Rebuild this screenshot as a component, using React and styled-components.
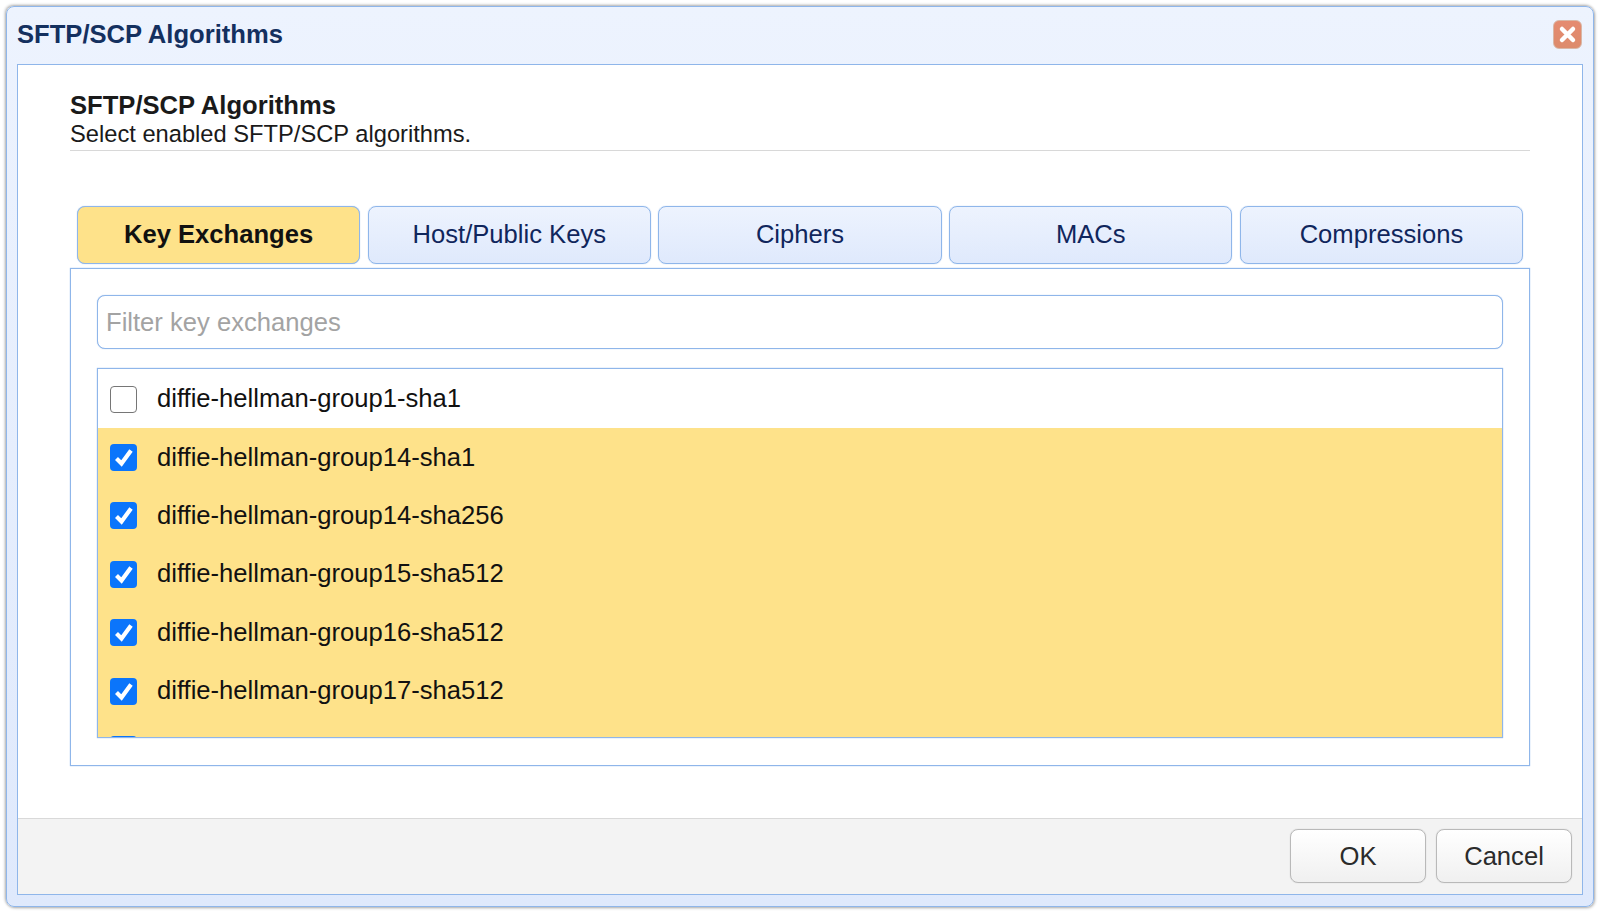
import React from 'react';
import styled, { createGlobalStyle } from 'styled-components';

const GlobalStyle = createGlobalStyle`
  html, body {
    margin: 0;
    padding: 0;
    background: #ffffff;
  }
  * {
    box-sizing: border-box;
  }
`;

const Page = styled.div`
  width: 1600px;
  height: 913px;
  padding: 6px;
  font-family: "Liberation Sans", Arial, sans-serif;
`;

const Dialog = styled.div`
  height: 901px;
  display: flex;
  flex-direction: column;
  padding: 0 10px 11px 10px;
  background: linear-gradient(180deg, #edf3fe 0%, #dfe9fc 100%);
  border: 1px solid #8fb6ea;
  border-radius: 8px;
  box-shadow: -1px -1px 3px rgba(0, 0, 0, 0.3), 1px 1px 3px rgba(0, 0, 0, 0.3);
`;

const TitleBar = styled.div`
  height: 57px;
  flex: none;
  display: flex;
  align-items: center;
  justify-content: space-between;
  padding-bottom: 3px;
`;

const DialogTitle = styled.div`
  font-size: 25.6px;
  font-weight: bold;
  color: #14305f;
`;

const CloseButton = styled.div`
  width: 29px;
  height: 29px;
  margin-right: 1px;
  display: flex;
  align-items: center;
  justify-content: center;
  background: linear-gradient(180deg, #e58b70 0%, #dd8b6c 100%);
  border: 1px solid #d9b7a6;
  border-radius: 6px;
`;

const Content = styled.div`
  flex: 1;
  display: flex;
  flex-direction: column;
  background: #ffffff;
  border: 1px solid #8fb6ea;
`;

const Body = styled.div`
  flex: 1;
  padding: 25px 52px 0 52px;
`;

const Heading = styled.div`
  font-size: 25.6px;
  line-height: 30px;
  margin-bottom: 1px;
  font-weight: bold;
  color: #1a1a1a;
`;

const Subheading = styled.div`
  font-size: 23.7px;
  line-height: 27px;
  color: #1a1a1a;
  padding-bottom: 2px;
  border-bottom: 1px solid #d8d8d8;
`;

const TabRow = styled.div`
  display: flex;
  gap: 7.6px;
  margin: 55px 7px 0 7px;
`;

const Tab = styled.div`
  flex: 1;
  height: 58px;
  padding-bottom: 2px;
  display: flex;
  align-items: center;
  justify-content: center;
  font-size: 25.6px;
  border: 1px solid #8fb6ea;
  border-radius: 8px;
  box-shadow: 0 0 1px #8fb6ea;
  font-weight: ${(p) => (p.$active ? 'bold' : 'normal')};
  color: ${(p) => (p.$active ? '#111111' : '#10265c')};
  background: ${(p) =>
    p.$active ? '#fee28a' : 'linear-gradient(180deg, #edf3fe 0%, #dfe9fc 100%)'};
`;

const TabPanel = styled.div`
  height: 498px;
  margin-top: 4px;
  padding: 26px;
  border: 1px solid #8fb6ea;
  box-shadow: 0 0 1px #8fb6ea;
`;

const FilterInput = styled.input`
  display: block;
  width: 100%;
  height: 54px;
  padding: 0 8px;
  font-family: inherit;
  font-size: 25.6px;
  color: #1a1a1a;
  background: #ffffff;
  border: 1px solid #8fb6ea;
  border-radius: 8px;
  box-shadow: 0 0 1px #8fb6ea;
  outline: none;

  &::placeholder {
    color: #a3a3a3;
    opacity: 1;
  }
`;

const AlgoList = styled.div`
  height: 370px;
  margin-top: 19px;
  padding-top: 1px;
  overflow: hidden;
  border: 1px solid #8fb6ea;
  box-shadow: 0 0 1px #8fb6ea;
`;

const AlgoRow = styled.div`
  height: 58.4px;
  display: flex;
  align-items: center;
  gap: 20px;
  padding-left: 12px;
  font-size: 25.6px;
  color: #111111;
  background: ${(p) => (p.$checked ? '#fee28a' : '#ffffff')};
`;

const AlgoName = styled.span`
  margin-top: -1px;
`;

const Check = styled.span`
  width: 27px;
  height: 27px;
  flex: none;
  display: flex;
  align-items: center;
  justify-content: center;
  border-radius: 4px;
  background: ${(p) => (p.$checked ? '#0b75fb' : '#ffffff')};
  border: ${(p) => (p.$checked ? 'none' : '1px solid #767676')};
`;

const Footer = styled.div`
  height: 76px;
  flex: none;
  display: flex;
  justify-content: flex-end;
  gap: 10px;
  padding: 10px 10px 0 0;
  background: #f3f3f3;
  border-top: 1px solid #d9d9d9;
`;

const FooterButton = styled.div`
  width: 136px;
  height: 54px;
  display: flex;
  align-items: center;
  justify-content: center;
  font-size: 25.6px;
  color: #2b2b2b;
  background: linear-gradient(180deg, #ffffff 0%, #f0f0f0 100%);
  border: 1px solid #b9b9b9;
  border-radius: 8px;
  box-shadow: 0 0 1px #b9b9b9;
`;

const tabs = ['Key Exchanges', 'Host/Public Keys', 'Ciphers', 'MACs', 'Compressions'];

// the seventh row is scrolled out of view, only the top of its checkbox shows
const algorithms = [
  { name: 'diffie-hellman-group1-sha1', checked: false },
  { name: 'diffie-hellman-group14-sha1', checked: true },
  { name: 'diffie-hellman-group14-sha256', checked: true },
  { name: 'diffie-hellman-group15-sha512', checked: true },
  { name: 'diffie-hellman-group16-sha512', checked: true },
  { name: 'diffie-hellman-group17-sha512', checked: true },
  { name: '', checked: true },
];

const App = () => (
  <Page>
    <GlobalStyle />
    <Dialog>
      <TitleBar>
        <DialogTitle>SFTP/SCP Algorithms</DialogTitle>
        <CloseButton>
          <svg width="19" height="19" viewBox="0 0 19 19">
            <path d="M4 4l11 11M15 4L4 15" stroke="#ffffff" strokeWidth="4.5" strokeLinecap="round" />
          </svg>
        </CloseButton>
      </TitleBar>
      <Content>
        <Body>
          <Heading>SFTP/SCP Algorithms</Heading>
          <Subheading>Select enabled SFTP/SCP algorithms.</Subheading>
          <TabRow>
            {tabs.map((tab, index) => (
              <Tab key={tab} $active={index === 0}>{tab}</Tab>
            ))}
          </TabRow>
          <TabPanel>
            <FilterInput placeholder="Filter key exchanges" readOnly />
            <AlgoList>
              {algorithms.map((algo, index) => (
                <AlgoRow key={index} $checked={algo.checked}>
                  <Check $checked={algo.checked}>
                    {algo.checked && (
                      <svg width="27" height="27" viewBox="0 0 27 27">
                        <path d="M6.5 14.5l5 5L21 6.5" fill="none" stroke="#ffffff" strokeWidth="4.2" />
                      </svg>
                    )}
                  </Check>
                  <AlgoName>{algo.name}</AlgoName>
                </AlgoRow>
              ))}
            </AlgoList>
          </TabPanel>
        </Body>
        <Footer>
          <FooterButton>OK</FooterButton>
          <FooterButton>Cancel</FooterButton>
        </Footer>
      </Content>
    </Dialog>
  </Page>
);

export default App;
